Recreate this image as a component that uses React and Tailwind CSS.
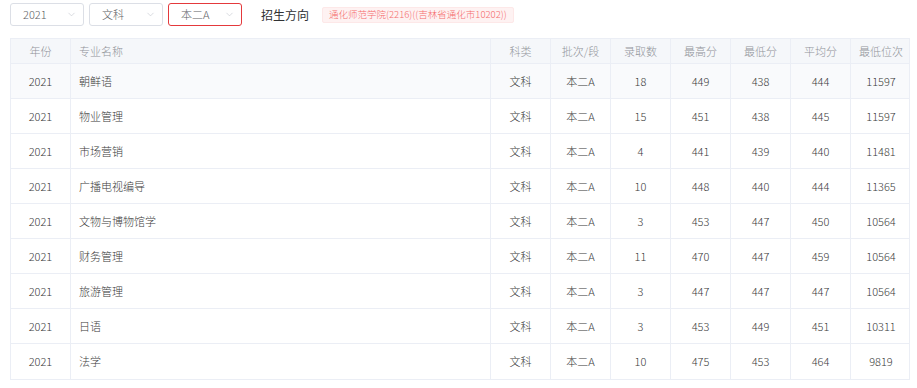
import React from 'react';
import { ChevronDown } from 'lucide-react';

const rows = [
    ['2021', '朝鲜语', '文科', '本二A', '18', '449', '438', '444', '11597'],
    ['2021', '物业管理', '文科', '本二A', '15', '451', '438', '445', '11597'],
    ['2021', '市场营销', '文科', '本二A', '4', '441', '439', '440', '11481'],
    ['2021', '广播电视编导', '文科', '本二A', '10', '448', '440', '444', '11365'],
    ['2021', '文物与博物馆学', '文科', '本二A', '3', '453', '447', '450', '10564'],
    ['2021', '财务管理', '文科', '本二A', '11', '470', '447', '459', '10564'],
    ['2021', '旅游管理', '文科', '本二A', '3', '447', '447', '447', '10564'],
    ['2021', '日语', '文科', '本二A', '3', '453', '449', '451', '10311'],
    ['2021', '法学', '文科', '本二A', '10', '475', '453', '464', '9819'],
];

const heads = ['年份', '专业名称', '科类', '批次/段', '录取数', '最高分', '最低分', '平均分', '最低位次'];

function Select({ value, active }) {
    return (
        <div
            className={
                'w-[74px] h-[23px] flex items-center justify-between pl-3 pr-[6px] rounded-[3px] border bg-white ' +
                (active ? 'border-[#e4393c]' : 'border-[#dcdfe6]')
            }
        >
            <span className="text-[11px] font-light text-[#606266]">{value}</span>
            <ChevronDown size={11} strokeWidth={1.3} className="text-[#c0c4cc]" />
        </div>
    );
}

export default function App() {
    return (
        <div
            className="w-[917px] h-[388px] bg-white overflow-hidden"
            style={{ fontFamily: '"Noto Sans CJK SC", "Noto Sans", sans-serif' }}
        >
            {/* filters */}
            <div className="flex items-center h-[23px] mt-[3px] pl-[10px]">
                <Select value="2021" />
                <div className="w-[5px]" />
                <Select value="文科" />
                <div className="w-[5px]" />
                <Select value="本二A" active />
                <span className="ml-[19px] text-[12px] text-[#303133]">招生方向</span>
                <span className="ml-[13px] h-[16px] flex items-center px-[6px] rounded-[2px] border border-[#fde8e8] bg-[#fef2f2] text-[9.5px] font-light text-[#f56c6c]">
                    通化师范学院(2216)((吉林省通化市10202))
                </span>
            </div>

            {/* table */}
            <div className="ml-[10px] mt-[12px] w-[900px] border border-[#ebeef5]">
                <div className="grid grid-cols-[60px_420px_repeat(7,60px)] h-[25px] bg-[#f5f7fa] border-b border-[#ebeef5]">
                    {heads.map((h, i) => (
                        <div
                            key={h}
                            className={
                                'flex items-center text-[11px] font-light text-[#909399] border-r border-[#ebeef5] last:border-r-0 ' +
                                (i === 1 ? 'pl-[8px]' : 'justify-center')
                            }
                        >
                            {h}
                        </div>
                    ))}
                </div>
                {rows.map((r, ri) => (
                    <div
                        key={ri}
                        className={
                            'grid grid-cols-[60px_420px_repeat(7,60px)] h-[35px] border-b border-[#ebeef5] last:border-b-0 ' +
                            (ri === 0 ? 'bg-[#f9fafc]' : 'bg-white')
                        }
                    >
                        {r.map((c, i) => (
                            <div
                                key={i}
                                className={
                                    'flex items-center text-[11px] font-light text-[#3a3a3a] border-r border-[#ebeef5] last:border-r-0 ' +
                                    (i === 1 ? 'pl-[8px]' : 'justify-center')
                                }
                            >
                                {c}
                            </div>
                        ))}
                    </div>
                ))}
            </div>
        </div>
    );
}
